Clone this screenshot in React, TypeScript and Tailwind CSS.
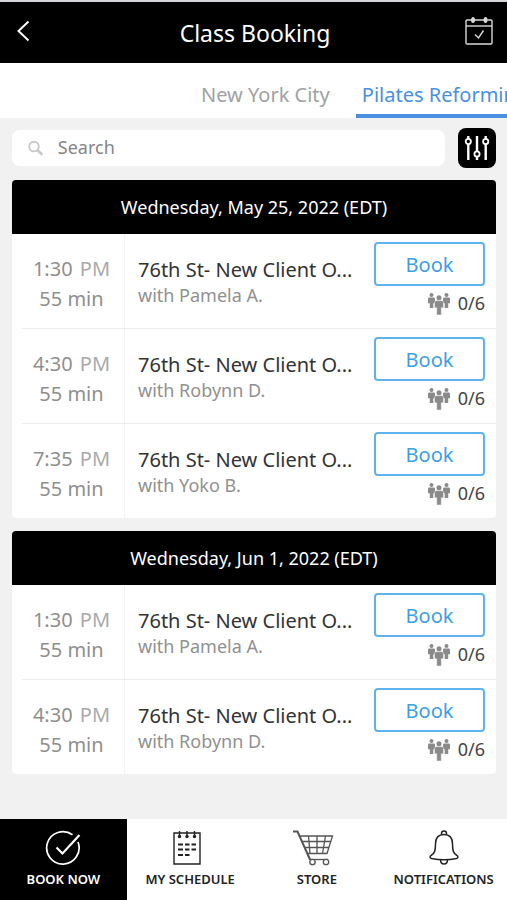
import React from 'react';
import clsx from 'clsx';

interface ClassSession {
  time: string;
  period: string;
  duration: string;
  title: string;
  instructor: string;
  booked: string;
}

interface ScheduleDay {
  date: string;
  sessions: ClassSession[];
}

const pamela: ClassSession = {
  time: '1:30',
  period: 'PM',
  duration: '55 min',
  title: '76th St- New Client O...',
  instructor: 'with Pamela A.',
  booked: '0/6',
};

const robynn: ClassSession = { ...pamela, time: '4:30', instructor: 'with Robynn D.' };
const yoko: ClassSession = { ...pamela, time: '7:35', instructor: 'with Yoko B.' };

const schedule: ScheduleDay[] = [
  { date: 'Wednesday, May 25, 2022 (EDT)', sessions: [pamela, robynn, yoko] },
  { date: 'Wednesday, Jun 1, 2022 (EDT)', sessions: [pamela, robynn] },
];

const BackIcon = () => (
  <svg width="14" height="22" viewBox="0 0 14 22" fill="none" stroke="currentColor" strokeWidth="2">
    <path d="M12.5 1.5 2.5 11l10 9.5" />
  </svg>
);

const CalendarCheckIcon = () => (
  <svg width="28" height="28" viewBox="0 0 28 28" fill="none" stroke="currentColor" strokeWidth="1.4">
    <rect x="1" y="3" width="26" height="24" rx="1" />
    <path d="M1 9h26" />
    <ellipse cx="8" cy="3" rx="1.300" ry="2.300" fill="currentColor" />
    <ellipse cx="20.500" cy="3" rx="1.300" ry="2.300" fill="currentColor" />
    <path d="m10 17.500 3.500 3.500 5-7.500" />
  </svg>
);

const SearchIcon = () => (
  <svg width="16" height="16" viewBox="0 0 16 16" fill="none" stroke="currentColor">
    <circle cx="6.500" cy="6.500" r="5.200" strokeWidth="2" />
    <path d="m10.500 10.500 4 4" strokeWidth="2.800" strokeLinecap="round" />
  </svg>
);

const FilterIcon = () => (
  <svg width="26" height="26" viewBox="0 0 26 26" fill="none" stroke="currentColor" strokeWidth="1.800">
    <path d="M4.300 1v3M4.300 9v16M13 1v15.500M13 21.500V25M21.700 1v3M21.700 9v16" strokeWidth="2.400" />
    <circle cx="4.300" cy="6.500" r="2.600" />
    <circle cx="13" cy="19" r="2.600" />
    <circle cx="21.700" cy="6.500" r="2.600" />
  </svg>
);

const PeopleIcon = () => (
  <svg width="22" height="22" viewBox="0 0 22 22" fill="currentColor">
    <circle cx="3.500" cy="2" r="2" />
    <path d="M1.300 4.400h4.400Q7 4.400 7 5.700v4.500H5.300V15H1.800v-4.800H0V5.700q0-1.300 1.300-1.300Z" />
    <circle cx="18.500" cy="2" r="2" />
    <path d="M16.300 4.400h4.400q1.300 0 1.300 1.300v4.500h-1.800V15h-3.500v-4.800H15V5.700q0-1.300 1.300-1.300Z" />
    <circle cx="11" cy="4.800" r="2.500" />
    <path
      d="M8.700 7.600h4.600q2.200 0 2.200 2v5.200h-2.200V22H8.700v-7.200H6.500V9.600q0-2 2.200-2Z"
      stroke="white"
      strokeWidth=".5"
    />
  </svg>
);

const BookNowIcon = () => (
  <svg width="36" height="36" viewBox="0 0 36 36" fill="none" stroke="currentColor" strokeWidth="1.700">
    <path d="M27.500 4.800A16.200 16.200 0 1 0 33 12" />
    <path d="m11.500 17.500 6 6L34.500 5" strokeWidth="2.200" />
  </svg>
);

const ScheduleIcon = () => (
  <svg width="42" height="36" viewBox="0 0 42 36" fill="none" stroke="currentColor" strokeWidth="1.400">
    <path d="M5 3h26v31H5z" />
    <path d="M10.500 1v5M18 1v5M25.500 1v5" />
    <g fill="currentColor" stroke="none">
      <circle cx="10.500" cy="6.500" r="1.700" />
      <circle cx="18" cy="6.500" r="1.700" />
      <circle cx="25.500" cy="6.500" r="1.700" />
    </g>
    <path d="M9 14.500h5m2 0h4.500m2 0H27M9 19.500h5m2 0h4.500m2 0H27M9 25h5m2 0h4.500" strokeWidth="2" />
  </svg>
);

const CartIcon = () => (
  <svg width="50" height="36" viewBox="0 0 50 36" fill="none" stroke="#555555" strokeWidth="1.300">
    <path d="M1 1.500h4.500L18 29.500" strokeWidth="2" />
    <path d="M8 6h32.500L35 23.500H15.500M10.500 11.500H39M13 17.500h24" />
    <path d="m16.500 6 1.500 17.500M25 6v17.500M33.500 6l-3 17.500" />
    <path d="M17 29.500h19" />
    <circle cx="20.500" cy="32" r="2.700" fill="white" />
    <circle cx="34" cy="32" r="2.700" fill="white" />
  </svg>
);

// Bell outline flares into a rounded rim, clapper hangs below it
const BellIcon = () => (
  <svg width="36" height="36" viewBox="0 0 36 36" fill="none" stroke="currentColor" strokeWidth="1.500">
    <circle cx="18" cy="3.500" r="2.500" />
    <path
      d="M18 4.500c-6 0-8.500 4-8.500 9.500 0 7-1 9.500-4.500 11.500-1.300 1-1.300 2.500.5 3C13 30 23 30 30.500 28.500c1.800-.5 1.800-2 .5-3-3.500-2-4.500-4.500-4.500-11.500 0-5.500-2.500-9.500-8.500-9.500Z"
      fill="white"
    />
    <path d="M14.500 29.500c0 6 7 6 7 0" />
  </svg>
);

const navItems = [
  { label: 'BOOK NOW', icon: BookNowIcon, active: true },
  { label: 'MY SCHEDULE', icon: ScheduleIcon, active: false },
  { label: 'STORE', icon: CartIcon, active: false },
  { label: 'NOTIFICATIONS', icon: BellIcon, active: false },
];

const SessionRow: React.FC<{ session: ClassSession }> = ({ session }) => (
  <li className="group pl-[10px]">
    <div className="flex border-b border-[#ededee] group-last:border-b-0">
      <div className="w-[103px] shrink-0 border-r border-[#f1f3f4] pt-5 pr-[3px] text-center text-xl leading-[30px] text-[#8f8f8f]">
        <p>
          {session.time} <span className="ml-0.5 text-[#aaaaaa]">{session.period}</span>
        </p>
        <p>{session.duration}</p>
      </div>
      <div className="min-w-0 flex-1 pt-[22px] pl-[13px]">
        <h3 className="truncate text-xl leading-7 text-[#333333]">{session.title}</h3>
        <p className="text-lg leading-[22px] text-[#919191]">{session.instructor}</p>
      </div>
      <div className="w-[122px] shrink-0 pt-2 pr-[11px] pb-[3px]">
        <button
          type="button"
          className="block h-11 w-full rounded-[4px] border-2 border-[#5fb2ee] pt-0.5 text-xl leading-6 text-[#3a9fe8]"
        >
          Book
        </button>
        <div className="mt-1 flex h-[35px] items-start justify-end gap-2 text-[#8a8a8a]">
          <span className="pt-[3px]">
            <PeopleIcon />
          </span>
          <span className="text-lg leading-[26px] text-[#444444]">{session.booked}</span>
        </div>
      </div>
    </div>
  </li>
);

const App: React.FC = () => {
  return (
    <div className="flex min-h-screen flex-col overflow-x-hidden bg-[#f1f1f2] font-['Noto_Sans','Open_Sans',sans-serif]">
      {/* Header */}
      <header className="flex h-[63px] items-center justify-between border-t-2 border-[#d5d7da] bg-black pr-[13px] pl-4 text-white">
        <button type="button" aria-label="Back" className="flex w-[30px] pb-1">
          <BackIcon />
        </button>
        <h1 className="text-[23px] leading-8">Class Booking</h1>
        <button type="button" aria-label="My bookings" className="flex w-[30px] justify-center pb-1 text-[#d8d8d8]">
          <CalendarCheckIcon />
        </button>
      </header>

      {/* Location tabs */}
      <nav className="flex h-[55px] justify-start gap-5 overflow-hidden bg-white pl-[195px] text-xl whitespace-nowrap">
        <a href="#nyc" className="shrink-0 border-b-4 border-transparent px-[6px] pt-[18px] text-[#a0a2a3]">
          New York City
        </a>
        <a href="#pilates" className="shrink-0 border-b-4 border-[#4a90e2] px-[6px] pt-[18px] text-[#4a90e2]">
          Pilates Reforming
        </a>
      </nav>

      <main className="flex-1 pt-[10px] pr-[11px] pb-8 pl-3">
        {/* Search and filter */}
        <div className="flex items-center gap-[13px]">
          <label className="flex h-9 flex-1 items-center gap-[15px] rounded-lg bg-white px-4 text-[#c8c8c8]">
            <SearchIcon />
            <input
              type="text"
              aria-label="Search"
              placeholder="Search"
              className="w-full min-w-0 pb-0.5 text-lg leading-6 text-[#333333] outline-none placeholder:text-[#858585]"
            />
          </label>
          <button
            type="button"
            aria-label="Filter"
            className="flex h-10 w-[38px] items-center justify-center rounded-lg bg-black text-white"
          >
            <FilterIcon />
          </button>
        </div>

        {/* Schedule */}
        <div className="mt-3 flex flex-col gap-[13px]">
          {schedule.map((day) => (
            <section key={day.date} className="overflow-hidden rounded-[4px] bg-white">
              <h2 className="bg-black text-center text-lg leading-[54px] text-white">{day.date}</h2>
              <ul>
                {day.sessions.map((session) => (
                  <SessionRow key={session.time} session={session} />
                ))}
              </ul>
            </section>
          ))}
        </div>
      </main>

      {/* Bottom navigation */}
      <nav className="grid h-[81px] grid-cols-4 bg-white text-[13px] leading-5 font-semibold text-[#222222]">
        {navItems.map(({ label, icon: Icon, active }) => (
          <a
            key={label}
            href="#"
            className={clsx('flex flex-col items-center gap-[3px] pt-[11px]', active && 'bg-black text-white')}
          >
            <Icon />
            <span>{label}</span>
          </a>
        ))}
      </nav>
    </div>
  );
};

export default App;
